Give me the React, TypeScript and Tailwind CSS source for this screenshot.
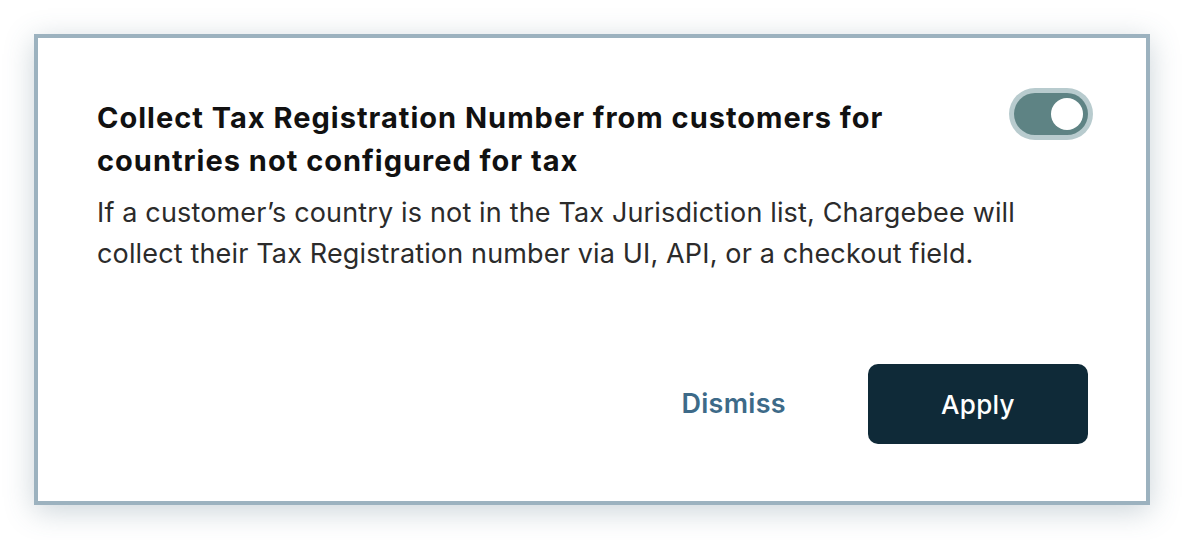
import { useState } from "react";

export default function App() {
  const [on, setOn] = useState(true);

  return (
    <div
      className="w-[1184px] h-[540px] bg-white pt-[34px] pl-[34px]"
      style={{ fontFamily: "Inter, 'Noto Sans', sans-serif" }}
    >
      <div className="w-[1116px] h-[471px] border-4 border-[#9cb2bf] bg-white shadow-[0_6px_28px_rgba(70,100,120,0.28)] pl-[59px] pr-[58px] pt-[58px] pb-[57px] flex flex-col">
        <div className="flex items-start justify-between">
          <h2 className="w-[890px] text-[29px] leading-[43px] font-bold text-[#111111] tracking-[1px]">
            Collect Tax Registration Number from customers for countries not configured for tax
          </h2>
          <button
            onClick={() => setOn(!on)}
            className={`mt-[-3px] w-[74px] h-[42px] rounded-full p-[5px] flex items-center shadow-[0_0_0_5px_#b8cbce] ${
              on ? "bg-[#5e8384] justify-end" : "bg-gray-300 justify-start"
            }`}
          >
            <span className="w-[32px] h-[32px] rounded-full bg-white block" />
          </button>
        </div>
        <p className="mt-[10px] text-[27px] leading-[41px] text-[#2b2b2b] tracking-[0.15px]">
          If a customer’s country is not in the Tax Jurisdiction list, Chargebee will collect their Tax
          Registration number via UI, API, or a checkout field.
        </p>
        <div className="mt-auto flex items-center justify-end gap-[82px]">
          <button className="text-[27px] font-semibold text-[#3d6a88] tracking-[0.3px]">Dismiss</button>
          <button className="w-[220px] h-[80px] rounded-[10px] bg-[#0f2a38] text-white text-[26px] font-medium tracking-[0.3px]">
            Apply
          </button>
        </div>
      </div>
    </div>
  );
}
